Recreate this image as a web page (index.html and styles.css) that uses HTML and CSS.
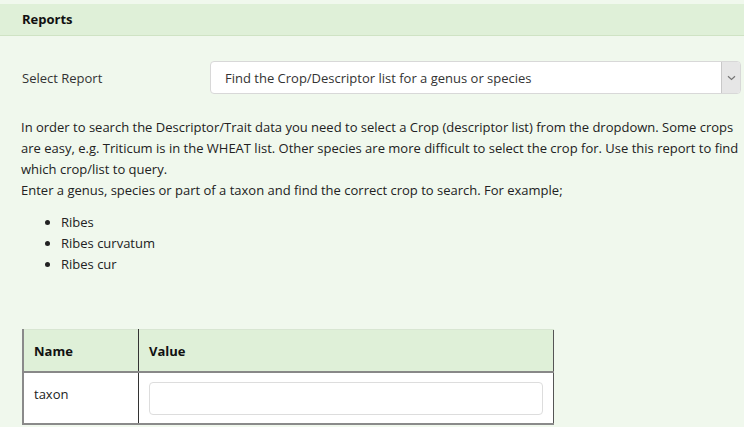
FILE: index.html
```html
<!DOCTYPE html>
<html>
<head>
<meta charset="utf-8">
<link rel="stylesheet" href="styles.css">
</head>
<body>
<div class="panel">
  <div class="panel-heading">Reports</div>
  <div class="panel-body">
    <div class="form-row">
      <label class="form-label">Select Report</label>
      <div class="select">
        <span class="select-text">Find the Crop/Descriptor list for a genus or species</span>
        <span class="select-btn">
          <svg width="9" height="6" viewBox="0 0 9 6"><path d="M1 1.2 L4.5 4.5 L8 1.2" fill="none" stroke="#777" stroke-width="1.2"/></svg>
        </span>
      </div>
    </div>
    <p class="desc">In order to search the Descriptor/Trait data you need to select a Crop (descriptor list) from the dropdown. Some crops are easy, e.g. Triticum is in the WHEAT list. Other species are more difficult to select the crop for. Use this report to find which crop/list to query.<br>Enter a genus, species or part of a taxon and find the correct crop to search. For example;</p>
    <ul class="examples">
      <li>Ribes</li>
      <li>Ribes curvatum</li>
      <li>Ribes cur</li>
    </ul>
    <table class="params">
      <thead>
        <tr><th class="col-name">Name</th><th class="col-value">Value</th></tr>
      </thead>
      <tbody>
        <tr><td class="col-name name-cell">taxon</td><td class="col-value value-cell"><div class="text-input"></div></td></tr>
      </tbody>
    </table>
  </div>
</div>
</body>
</html>
```

FILE: styles.css
```css
html, body {
  margin: 0;
  padding: 0;
  background: #f0f8ed;
  font-family: "Open Sans", "Noto Sans", sans-serif;
  font-size: 13px;
  color: #222;
  overflow: hidden;
}
.panel {
  padding-top: 4px;
}
.panel-heading {
  background: #dff0d8;
  border-bottom: 1px solid #cfe3c4;
  height: 31px;
  line-height: 31px;
  padding-left: 22px;
  font-weight: bold;
  font-size: 13px;
  color: #111;
}
.panel-body {
  padding: 25px 3px 0 21px;
}
.form-row {
  display: flex;
  align-items: center;
}
.form-label {
  width: 188px;
  padding-left: 1px;
  color: #333;
}
.select {
  flex: 1;
  height: 33px;
  box-sizing: border-box;
  background: #fff;
  border: 1px solid #d8d8d8;
  border-radius: 4px;
  display: flex;
  align-items: center;
  overflow: hidden;
}
.select-text {
  flex: 1;
  padding-left: 14px;
  color: #333;
}
.select-btn {
  width: 18px;
  height: 100%;
  background: #e6e6e6;
  border-left: 1px solid #c8c8c8;
  display: flex;
  align-items: center;
  justify-content: center;
}
.desc {
  margin: 23px 0 0 0;
  line-height: 21px;
  color: #222;
}
.examples {
  margin: 11px 0 0 0;
  padding-left: 40px;
  line-height: 21px;
}
.params {
  margin-top: 54px;
  margin-left: 1px;
  border-collapse: collapse;
  width: 532px;
  border-left: 2px solid #8a8a8a;
  border-right: 1px solid #555;
  border-bottom: 2px solid #8a8a8a;
}
.params th {
  background: #dff0d8;
  text-align: left;
  font-weight: bold;
  height: 41px;
  padding: 0 10px;
  border-bottom: 2px solid #888;
  border-top: 1px solid #d8e6d2;
  color: #111;
}
.params td {
  background: #fff;
  height: 52px;
  box-sizing: border-box;
  vertical-align: top;
  padding: 0 10px;
}
.name-cell {
  padding-top: 12px !important;
  line-height: 18px;
}
.value-cell {
  padding-top: 9px !important;
}
.col-name {
  width: 94px;
  border-right: 1px solid #333;
}
.text-input {
  height: 33px;
  box-sizing: border-box;
  border: 1px solid #ddd;
  border-radius: 4px;
  background: #fff;
}
```
